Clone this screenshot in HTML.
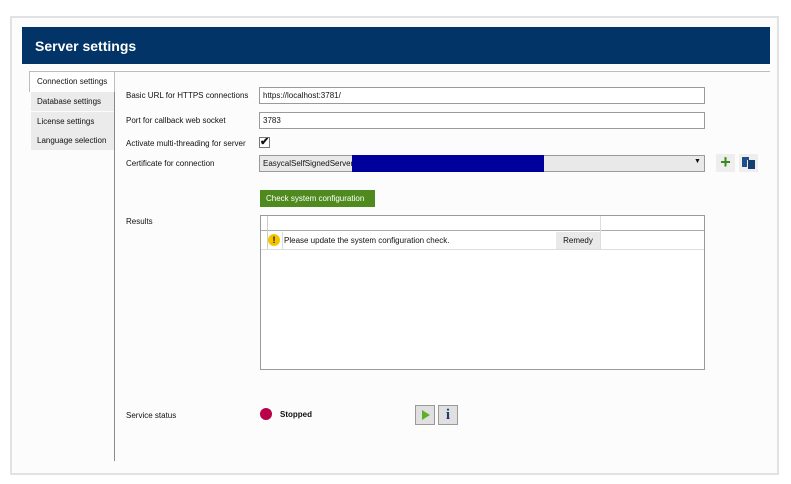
<!DOCTYPE html>
<html><head><style>
*{box-sizing:border-box;margin:0;padding:0}
body{width:791px;height:484px;background:#fff;position:relative;font-family:"Liberation Sans",sans-serif;font-size:8px;color:#111;overflow:hidden}
div{white-space:nowrap}
.a{position:absolute}
.lbl{position:absolute;left:126px;font-size:8px}
.inp{position:absolute;left:259px;width:446px;height:17px;border:1px solid #9a9a9a;background:#fff;padding:3px 3px;font-size:8px}
.tab{position:absolute;left:31px;width:83px;height:19px;background:#ebebeb;padding:5px 6px;font-size:8px}
</style></head><body>
<div class="a" style="left:10px;top:16px;width:769px;height:459px;border:2px solid #e2e2e2;background:#fcfcfc"></div>
<div class="a" style="left:22px;top:27px;width:748px;height:37px;background:#033468;color:#fff;font-size:14px;font-weight:bold;padding:11px 13px">Server settings</div>
<div class="a" style="left:114px;top:71px;width:656px;height:1px;background:#bdbdbd"></div>
<div class="a" style="left:114px;top:90px;width:1px;height:371px;background:#8a8a8a"></div>
<div class="a" style="left:29px;top:71px;width:86px;height:21px;background:#fff;border:1px solid #bdbdbd;border-bottom:none;padding:5px 7px;font-size:8px">Connection settings</div>
<div class="tab" style="top:92px">Database settings</div>
<div class="tab" style="top:112px">License settings</div>
<div class="tab" style="top:131px">Language selection</div>
<div class="lbl" style="top:91px">Basic URL for HTTPS connections</div>
<div class="inp" style="top:87px">https://localhost:3781/</div>
<div class="lbl" style="top:116px">Port for callback web socket</div>
<div class="inp" style="top:112px">3783</div>
<div class="lbl" style="top:139px">Activate multi-threading for server</div>
<div class="a" style="left:259px;top:137px;width:11px;height:11px;border:1px solid #777;background:#fff;font-size:11px;line-height:9px;font-weight:bold;text-align:center">✔</div>
<div class="lbl" style="top:159px">Certificate for connection</div>
<div class="a" style="left:259px;top:155px;width:446px;height:17px;border:1px solid #9a9a9a;background:#e9e9e9;padding:3px 3px">EasycalSelfSignedServer</div>
<div class="a" style="left:352px;top:155px;width:192px;height:17px;background:#00009c"></div>
<div class="a" style="left:694px;top:158px;font-size:7px">▼</div>
<div class="a" style="left:716px;top:154px;width:19px;height:18px;background:#eee;color:#3a8a1e;font-size:18px;font-weight:bold;line-height:17px;text-align:center">+</div>
<div class="a" style="left:739px;top:154px;width:19px;height:18px;background:#eee"><div class="a" style="left:3px;top:3px;width:7px;height:10px;background:#1f4f8a"></div><div class="a" style="left:8px;top:6px;width:8px;height:9px;background:#153d6e;border-left:1px solid #eee"></div></div>
<div class="a" style="left:260px;top:190px;width:115px;height:17px;background:#4f8a1f;color:#fff;padding:4px 6px">Check system configuration</div>
<div class="lbl" style="top:217px">Results</div>
<div class="a" style="left:260px;top:215px;width:445px;height:155px;border:1px solid #9a9a9a;background:#fff"></div>
<div class="a" style="left:261px;top:216px;width:443px;height:15px;border-bottom:1px solid #aaa"></div>
<div class="a" style="left:267px;top:216px;width:1px;height:34px;background:#ccc"></div>
<div class="a" style="left:600px;top:216px;width:1px;height:34px;background:#ddd"></div>
<div class="a" style="left:261px;top:249px;width:443px;height:1px;background:#ddd"></div>
<div class="a" style="left:268px;top:234px;width:12px;height:12px;border-radius:50%;background:#f5c400;font-size:9px;font-weight:bold;text-align:center;line-height:12px">!</div>
<div class="a" style="left:282px;top:232px;width:1px;height:17px;background:#ddd"></div>
<div class="a" style="left:284px;top:236px">Please update the system configuration check.</div>
<div class="a" style="left:556px;top:232px;width:44px;height:17px;background:#e9e9e9;text-align:center;padding-top:4px">Remedy</div>
<div class="a" style="left:126px;top:411px;font-size:8px">Service status</div>
<div class="a" style="left:260px;top:408px;width:12px;height:12px;border-radius:50%;background:#b8004a"></div>
<div class="a" style="left:280px;top:410px;font-weight:bold">Stopped</div>
<div class="a" style="left:415px;top:405px;width:20px;height:20px;border:1px solid #999;background:#e0e0e0"><div class="a" style="left:6px;top:4px;width:0;height:0;border-left:8px solid #5cb02c;border-top:5px solid transparent;border-bottom:5px solid transparent"></div></div>
<div class="a" style="left:438px;top:405px;width:20px;height:20px;border:1px solid #999;background:#e0e0e0;color:#1f3d70;font-family:'Liberation Serif',serif;font-weight:bold;font-size:15px;text-align:center;line-height:18px">i</div>
</body></html>
